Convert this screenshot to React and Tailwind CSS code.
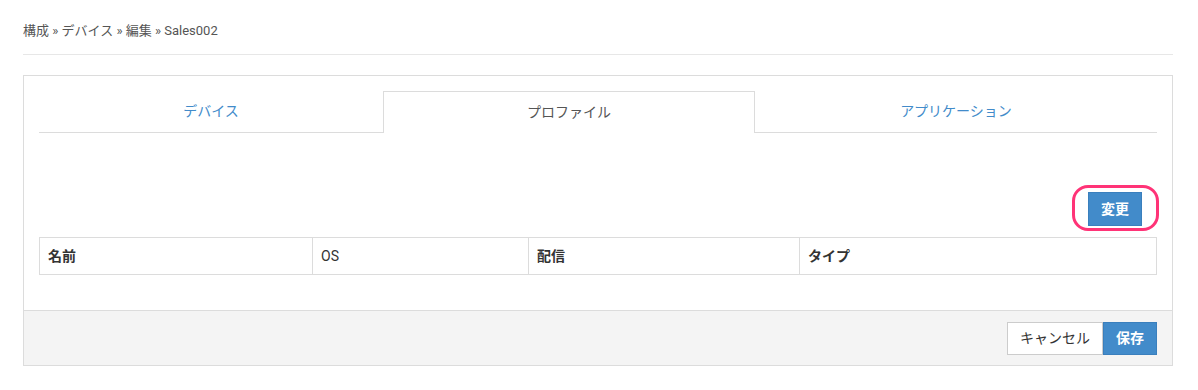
import React from 'react';

const tabs = [
  { label: 'デバイス', w: 'w-[344px]' },
  { label: 'プロファイル', w: 'w-[372px]', active: true },
  { label: 'アプリケーション', w: 'flex-1' },
];

const cols = [
  { label: '名前', w: 'w-[272px]' },
  { label: 'OS', w: 'w-[216px]', normal: true },
  { label: '配信', w: 'w-[271px]' },
  { label: 'タイプ', w: 'flex-1' },
];

export default function App() {
  return (
    <div
      className="w-[1198px] h-[390px] bg-white text-[#333]"
      style={{ fontFamily: 'Roboto, "Noto Sans CJK JP", sans-serif' }}
    >
      <div className="ml-[23px] w-[1150px]">
        {/* Breadcrumb */}
        <div className="h-[55px] pt-[21px] border-b border-[#e7e7e7] text-[13px] text-[#555]">
          構成 » デバイス » 編集 » Sales002
        </div>

        {/* Panel */}
        <div className="mt-[20px] border border-[#dcdcdc]">
          <div className="px-[15px] pt-[15px] pb-[35px]">
            {/* Tabs */}
            <div className="flex h-[42px] border-b border-[#dcdcdc]">
              {tabs.map((t) => (
                <div
                  key={t.label}
                  className={`${t.w} flex items-center justify-center text-[14px] ${
                    t.active
                      ? 'bg-white border border-b-0 border-[#dcdcdc] -mb-px text-[#555]'
                      : 'text-[#428bca]'
                  }`}
                >
                  {t.label}
                </div>
              ))}
            </div>

            {/* Action */}
            <div className="flex justify-end mt-[59px] pr-[15px]">
              <div className="relative">
                <button className="w-[54px] h-[34px] bg-[#428bca] border border-[#3a7fbd] text-white text-[14px] font-bold">
                  変更
                </button>
                <div className="absolute -left-[16px] -top-[7px] w-[87px] h-[46px] rounded-[16px] border-[3px] border-[#ff3377]" />
              </div>
            </div>

            {/* Table */}
            <div className="mt-[11px] flex h-[38px] border border-[#dcdcdc]">
              {cols.map((c, i) => (
                <div
                  key={c.label}
                  className={`${c.w} flex items-center px-[8px] text-[14px] ${
                    c.normal ? 'font-normal' : 'font-bold'
                  } ${i > 0 ? 'border-l border-[#dcdcdc]' : ''}`}
                >
                  {c.label}
                </div>
              ))}
            </div>
          </div>

          {/* Footer */}
          <div className="h-[55px] bg-[#f4f4f4] border-t border-[#dcdcdc] flex items-center justify-end pr-[15px]">
            <button className="h-[33px] px-[12px] bg-white border border-[#ccc] text-[14px] text-[#333]">
              キャンセル
            </button>
            <button className="h-[33px] px-[12px] bg-[#428bca] border border-[#3a7fbd] text-[14px] font-bold text-white">
              保存
            </button>
          </div>
        </div>
      </div>
    </div>
  );
}
